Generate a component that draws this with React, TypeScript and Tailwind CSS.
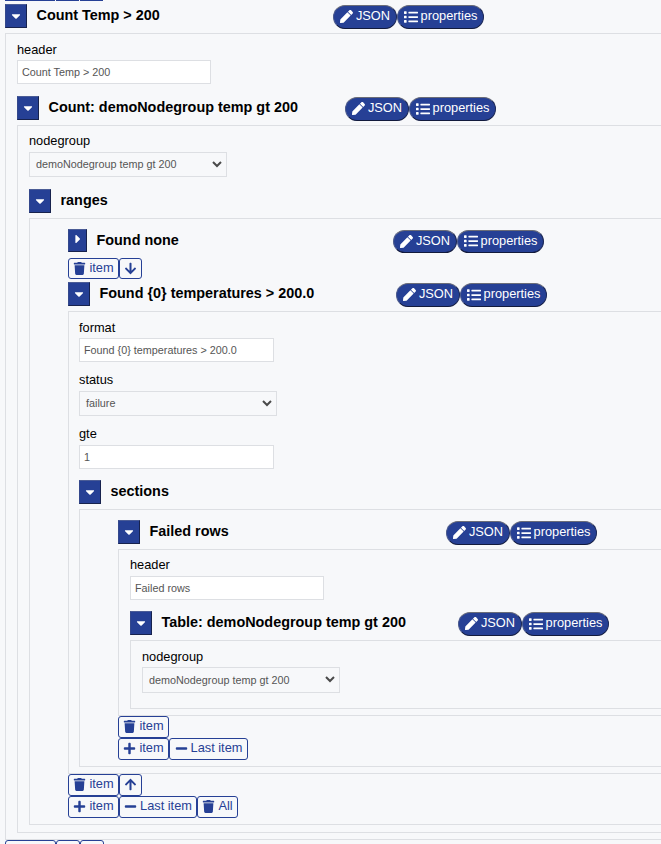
import React from "react";
import {
  FaArrowDown,
  FaArrowUp,
  FaCaretDown,
  FaCaretRight,
  FaList,
  FaMinus,
  FaPen,
  FaPlus,
  FaTrash,
} from "react-icons/fa";

function Pill({ icon, text, className }: { icon: React.ReactNode; text: string; className: string }) {
  return (
    <button
      className={`flex shrink-0 items-center justify-center gap-[3px] rounded-full border border-t-[#6b6d78] border-l-[#4c5a8c] border-r-[#1c2856] border-b-[#121a3c] bg-[#264095] pb-px text-[12.8px] leading-none text-white ${className}`}
    >
      {icon}
      <span>{text}</span>
    </button>
  );
}

function TitleRow({
  title,
  collapsed = false,
  pills = true,
  className = "",
}: {
  title: string;
  collapsed?: boolean;
  pills?: boolean;
  className?: string;
}) {
  return (
    <div className={`flex h-[29px] items-start ${className}`}>
      <button
        className={`flex shrink-0 items-center justify-center border border-t-[#4b5c96] border-l-[#34488c] border-r-[#17224d] border-b-[#17224d] bg-[#264095] text-white ${
          collapsed ? "h-[23px] w-[19px]" : "h-[24px] w-[22px]"
        }`}
      >
        {collapsed ? <FaCaretRight className="mb-[3px] size-[14px]" /> : <FaCaretDown className="mb-px size-[14px]" />}
      </button>
      <h3 className="w-[306px] shrink-0 pl-[9.5px] text-[14.4px] leading-[22px] font-bold whitespace-nowrap text-black">
        {title}
      </h3>
      {pills && (
        <div className={`flex pt-px ${collapsed ? "h-[24px]" : "h-[25px]"}`}>
          <Pill className="w-[64px]" icon={<FaPen className="size-[13px]" />} text="JSON" />
          <Pill className="w-[87px]" icon={<FaList className="size-[14px]" />} text="properties" />
        </div>
      )}
    </div>
  );
}

function Label({ text, className = "" }: { text: string; className?: string }) {
  return <label className={`block h-[20px] text-[12.8px] leading-[20px] text-black ${className}`}>{text}</label>;
}

function Input({ value, className = "w-[194px]" }: { value: string; className?: string }) {
  return (
    <div
      className={`flex h-[24px] items-center border border-[#dddfe3] bg-white pl-[4px] text-[10.8px] text-[#555] ${className}`}
    >
      {value}
    </div>
  );
}

function Select({ value, className = "h-[25px]" }: { value: string; className?: string }) {
  return (
    <div
      className={`flex w-[198px] items-center justify-between border border-[#dddfe3] pr-[4px] pl-[6px] text-[10.8px] text-[#555] ${className}`}
    >
      <span>{value}</span>
      <svg viewBox="0 0 10 7" className="mb-px h-[7px] w-[10px]" fill="none" stroke="#4a4a4a" strokeWidth="2">
        <path d="M1 1l4 4 4-4" />
      </svg>
    </div>
  );
}

function Tool({ icon, text, className }: { icon: React.ReactNode; text?: string; className: string }) {
  return (
    <button
      className={`flex shrink-0 items-center justify-center gap-[3px] rounded-[3px] border border-[#264095] pb-px text-[12.8px] leading-none text-[#264095] ${className}`}
    >
      {icon}
      {text && <span>{text}</span>}
    </button>
  );
}

const trash = <FaTrash className="size-[13px]" />;
const plus = <FaPlus className="size-[13px]" />;
const minus = <FaMinus className="size-[13px]" />;

function Panel({ className = "", children }: { className?: string; children: React.ReactNode }) {
  return <section className={`border-y border-l border-[#dddfe3] ${className}`}>{children}</section>;
}

export default function App() {
  return (
    <div className="h-[844px] w-full overflow-hidden bg-[#f7f8fa] pl-[5px] font-['Liberation_Sans',Arial,sans-serif]">
      <div className="flex h-px gap-px">
        <div className="w-[50px] bg-[#264095]" />
        <div className="w-[23px] bg-[#264095]" />
        <div className="w-[23px] bg-[#264095]" />
      </div>
      <TitleRow className="mt-[3px]" title="Count Temp > 200" />
      <Panel className="h-[807px] pl-[11px]">
        <Label className="mt-[6px]" text="header" />
        <Input value="Count Temp > 200" />
        <TitleRow className="mt-[12px]" title="Count: demoNodegroup temp gt 200" />
        <Panel className="h-[708px] pl-[11px]">
          <Label className="mt-[5px]" text="nodegroup" />
          <Select className="mt-px h-[25px]" value="demoNodegroup temp gt 200" />
          <TitleRow className="mt-[12px]" title="ranges" pills={false} />
          <Panel className="h-[607px] pl-[38px]">
            <TitleRow className="mt-[10px]" title="Found none" collapsed />
            <div className="flex">
              <Tool className="h-[21px] w-[51px]" icon={trash} text="item" />
              <Tool className="h-[21px] w-[23px]" icon={<FaArrowDown className="size-[13px]" />} />
            </div>
            <TitleRow className="mt-[3px]" title="Found {0} temperatures > 200.0" />
            <Panel className="h-[463px] pl-[10px]">
              <Label className="mt-[6px]" text="format" />
              <Input className="w-[195px]" value="Found {0} temperatures > 200.0" />
              <Label className="mt-[8px]" text="status" />
              <Select className="mt-px h-[25px]" value="failure" />
              <Label className="mt-[8px]" text="gte" />
              <Input className="mt-px w-[195px]" value="1" />
              <TitleRow className="mt-[11px]" title="sections" pills={false} />
              <Panel className="h-[258px] pl-[38px]">
                <TitleRow className="mt-[10px]" title="Failed rows" />
                <Panel className="h-[167px] pl-[11px]">
                  <Label className="mt-[5px]" text="header" />
                  <Input className="mt-px w-[194px]" value="Failed rows" />
                  <TitleRow className="mt-[11px]" title="Table: demoNodegroup temp gt 200" />
                  <Panel className="h-[69px] pl-[11px]">
                    <Label className="mt-[6px]" text="nodegroup" />
                    <Select className="h-[26px]" value="demoNodegroup temp gt 200" />
                  </Panel>
                </Panel>
                <Tool className="h-[22px] w-[51px]" icon={trash} text="item" />
                <div className="flex">
                  <Tool className="h-[22px] w-[51px]" icon={plus} text="item" />
                  <Tool className="h-[22px] w-[79px]" icon={minus} text="Last item" />
                </div>
              </Panel>
            </Panel>
            <div className="flex">
              <Tool className="h-[22px] w-[51px]" icon={trash} text="item" />
              <Tool className="h-[22px] w-[23px]" icon={<FaArrowUp className="size-[13px]" />} />
            </div>
            <div className="flex">
              <Tool className="h-[22px] w-[51px]" icon={plus} text="item" />
              <Tool className="h-[22px] w-[78px]" icon={minus} text="Last item" />
              <Tool className="h-[22px] w-[41px]" icon={trash} text="All" />
            </div>
          </Panel>
        </Panel>
      </Panel>
      <div className="flex">
        <div className="h-[22px] w-[51px] rounded-[3px] border border-[#264095]" />
        <div className="h-[22px] w-[24px] rounded-[3px] border border-[#264095]" />
        <div className="h-[22px] w-[24px] rounded-[3px] border border-[#264095]" />
      </div>
    </div>
  );
}
